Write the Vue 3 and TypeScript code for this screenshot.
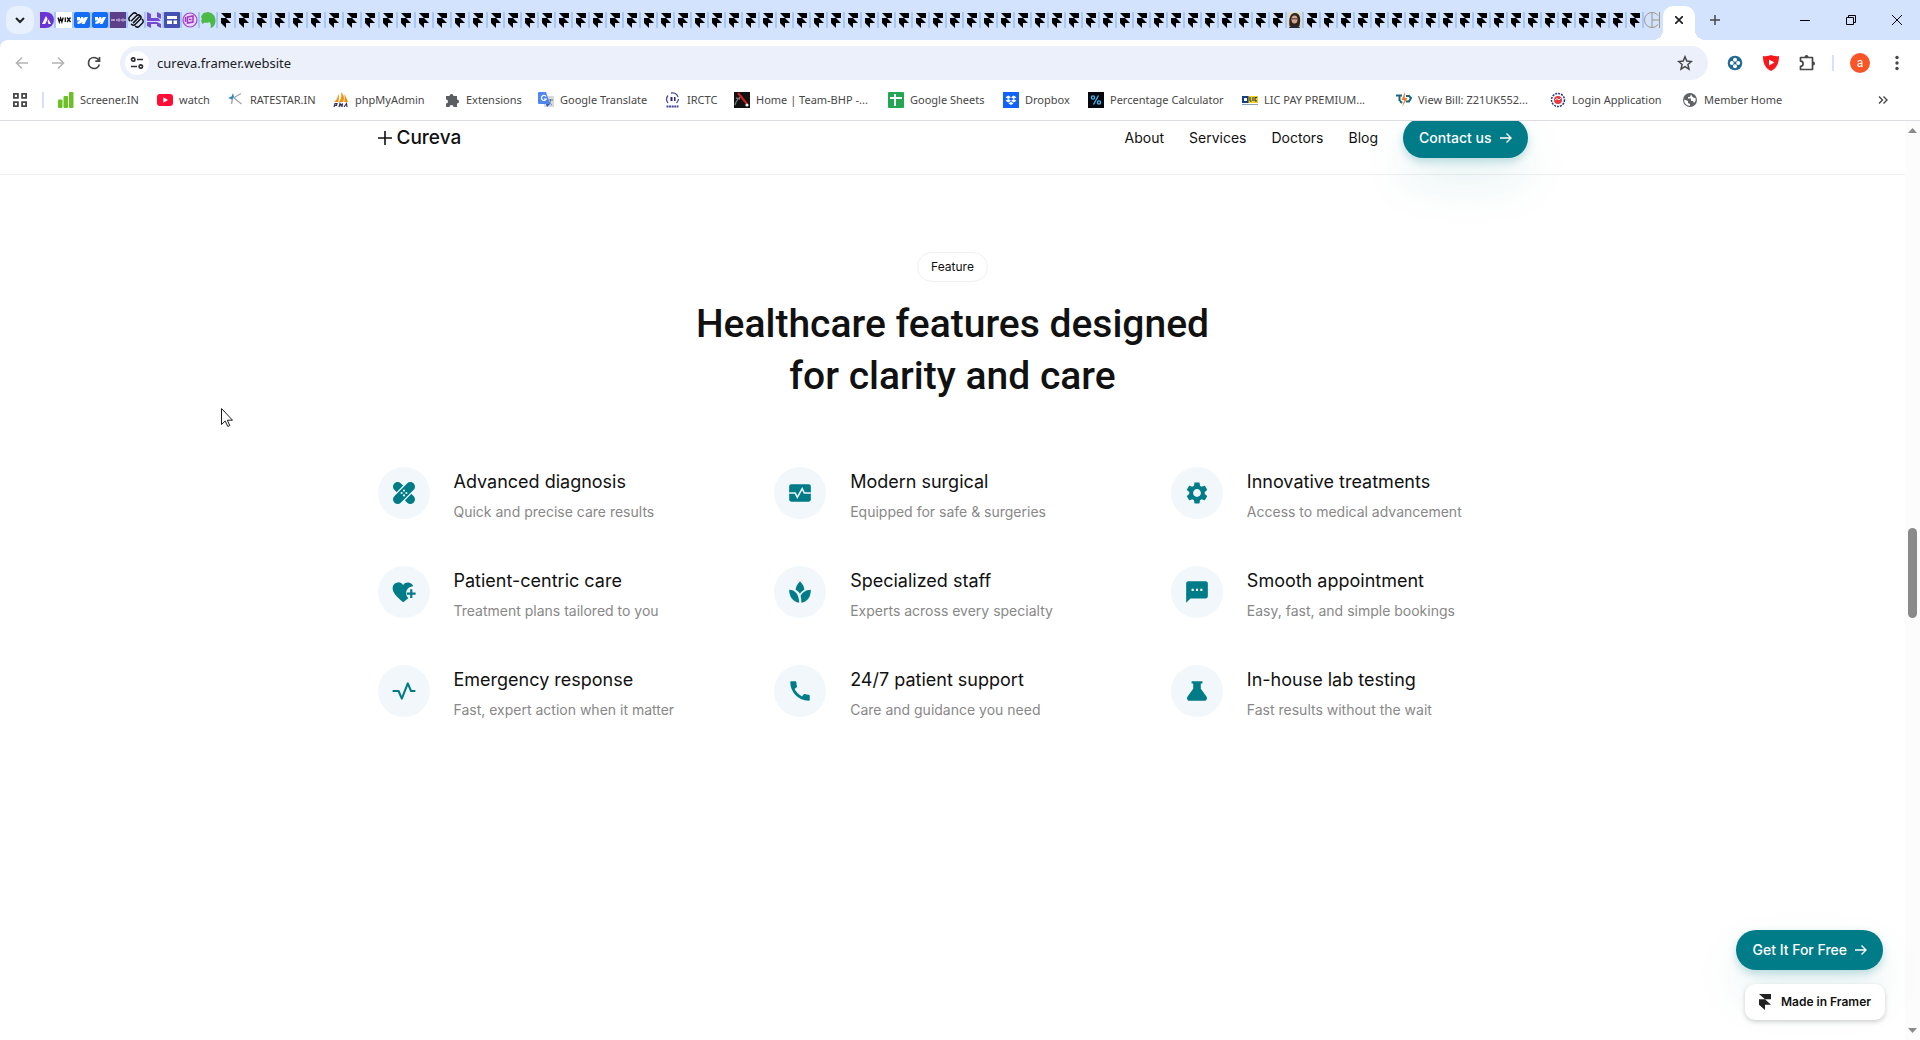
<script setup lang="ts">
interface Bookmark {
  label: string
  icon: string
  width: number
}

interface Feature {
  title: string
  text: string
  icon: string
}

const siteTabs = ['astra', 'wix', 'webflow', 'webflow', 'colorlib', 'squarespace', 'hostinger', 'sites', 'purple', 'horse']
const framerTabs = Array.from({ length: 83 }, (_, i) => i)
const portraitTab = 62
const firstNarrowTab = 15

const bookmarks: Bookmark[] = [
  { label: 'Screener.IN', icon: 'bars', width: 99 },
  { label: 'watch', icon: 'youtube', width: 71 },
  { label: 'RATESTAR.IN', icon: 'star', width: 105 },
  { label: 'phpMyAdmin', icon: 'pma', width: 111 },
  { label: 'Extensions', icon: 'puzzle', width: 94 },
  { label: 'Google Translate', icon: 'translate', width: 127 },
  { label: 'IRCTC', icon: 'irctc', width: 69 },
  { label: 'Home | Team-BHP -...', icon: 'bhp', width: 154 },
  { label: 'Google Sheets', icon: 'sheets', width: 115 },
  { label: 'Dropbox', icon: 'dropbox', width: 85 },
  { label: 'Percentage Calculator', icon: 'percent', width: 154 },
  { label: 'LIC PAY PREMIUM...', icon: 'lic', width: 154 },
  { label: 'View Bill: Z21UK552...', icon: 'bill', width: 154 },
  { label: 'Login Application', icon: 'login', width: 132 },
  { label: 'Member Home', icon: 'globe', width: 102 },
]

const navLinks = ['About', 'Services', 'Doctors', 'Blog']

const features: Feature[] = [
  { title: 'Advanced diagnosis', text: 'Quick and precise care results', icon: 'bandage' },
  { title: 'Modern surgical', text: 'Equipped for safe & surgeries', icon: 'monitor' },
  { title: 'Innovative treatments', text: 'Access to medical advancement', icon: 'gear' },
  { title: 'Patient-centric care', text: 'Treatment plans tailored to you', icon: 'heart' },
  { title: 'Specialized staff', text: 'Experts across every specialty', icon: 'leaf' },
  { title: 'Smooth appointment', text: 'Easy, fast, and simple bookings', icon: 'chat' },
  { title: 'Emergency response', text: 'Fast, expert action when it matter', icon: 'pulse' },
  { title: '24/7 patient support', text: 'Care and guidance you need', icon: 'phone' },
  { title: 'In-house lab testing', text: 'Fast results without the wait', icon: 'flask' },
]
</script>

<template>
  <div class="window">
    <div class="tabstrip">
      <button class="tab-search" aria-label="Search tabs">
        <svg width="10" height="7" viewBox="0 0 10 7"><path d="M1 1l4 4 4-4" fill="none" stroke="#202124" stroke-width="2" /></svg>
      </button>
      <button v-for="(site, i) in siteTabs" :key="'s' + i" class="tab" :aria-label="site">
        <svg width="16" height="16" viewBox="0 0 16 16">
          <g v-if="site === 'astra'">
            <path d="M2 0h6a8 8 0 010 16H2z" fill="#6a35d6" />
            <path d="M4 12l4-8 1.600 3-2.400 5zM9.500 9l1-1.500L13 12h-2.500z" fill="#fff" />
          </g>
          <g v-else-if="site === 'wix'">
            <rect width="16" height="16" fill="#fff" />
            <path d="M2 5.500l1.300 4.500 1.300-4 1.300 4 1.300-4.500M9.300 5.500V10M11 5.500l3.500 4.500M14.500 5.500L11 10" fill="none" stroke="#111" stroke-width="1.300" />
          </g>
          <g v-else-if="site === 'webflow'">
            <rect width="16" height="16" rx="2" fill="#146ef5" />
            <path d="M14 5l-3.500 7H7.600L9 9.200C7.700 11 6 12 3.400 12V9.500s1.600-.1 2.600-1.100H3V5h3v2l1.400-2h2v2l1.500-2z" fill="#fff" />
          </g>
          <g v-else-if="site === 'colorlib'">
            <rect width="16" height="16" fill="#5c3f8a" />
            <path d="M1 8h2.500M4 7v2M6 8h2M9 6.500v3M10.500 8H12M13 6.500v3M15 7v2" stroke="#c3a9d8" stroke-width="1.600" />
          </g>
          <g v-else-if="site === 'squarespace'" fill="none" stroke="#111" stroke-width="1.500" stroke-linecap="round">
            <path d="M3.500 8.800l5-5a2.700 2.700 0 013.800 0M5.500 10.600l5.800-5.800M3.500 12.300a2.700 2.700 0 003.800 0l5-5a2.700 2.700 0 000-3.500M8.500 1.800a2.700 2.700 0 00-3.800 0l-3 3a2.700 2.700 0 000 4M7.500 14.200a2.700 2.700 0 003.800 0l3-3a2.700 2.700 0 000-4" />
          </g>
          <g v-else-if="site === 'hostinger'" fill="#7449d6">
            <path d="M1 0l4 2v4h7l3 3H1zM11 0l4 2v5l-4-2zM1 10h10l4 2v4l-4-2v-2H5v4l-4-2z" />
          </g>
          <g v-else-if="site === 'sites'">
            <rect width="16" height="16" rx="1" fill="#4350af" />
            <path d="M3 4h10v3H3zM3 8.500h5V12H3zM9.500 8.500H13V12H9.500z" fill="#fff" />
          </g>
          <g v-else-if="site === 'purple'">
            <circle cx="8" cy="8" r="7" fill="#e6d8fa" stroke="#a043cf" stroke-width="1.200" />
            <path d="M5.500 5l5.500-1v6l-5.500 1zM3.500 5v5M7 7.500h2.500" fill="none" stroke="#a637c4" stroke-width="1.500" />
          </g>
          <g v-else>
            <path d="M1 5c1-3 3-5 5-4.500L8 0c5 1 7.500 4 7.500 8.500 0 4-2 7-5 7.500.5-2 .5-4-1-6-2 1-4 1-5 .5L2.500 12 1 9c1-1 1-3 0-4z" fill="#4cbb45" />
          </g>
        </svg>
      </button>
      <button
        v-for="n in framerTabs"
        :key="n"
        class="tab"
        :class="{ narrow: n >= firstNarrowTab }"
        aria-label="Framer tab"
      >
        <svg v-if="n === portraitTab" width="15" height="16" viewBox="0 0 15 16">
          <rect width="15" height="16" fill="#d9dccf" />
          <path d="M2.500 14C1.500 7 3 1 8 1s6 5 4.500 13z" fill="#33231f" />
          <ellipse cx="7.500" cy="7.500" rx="3" ry="4" fill="#d3a48e" />
          <path d="M2 16c1-4 10-4 11 0z" fill="#262634" />
          <path d="M5 6.800h5" stroke="#403030" />
        </svg>
        <svg v-else width="14" height="16" viewBox="0 0 14 16">
          <path d="M3 1h10v5H8l5 5H8v5l-5-5V6h5z" fill="#000" />
        </svg>
      </button>
      <button class="tab narrow last" aria-label="Circle tab">
        <svg width="17" height="16" viewBox="0 0 17 16">
          <path d="M14 3.500A7.500 7.500 0 108 15.500 7.500 7.500 0 0014 12.500M8 .5v15M8 8h8M15.500 0v16" fill="none" stroke="#9b9688" />
        </svg>
      </button>
      <div class="active-tab">
        <button aria-label="Close tab">
          <svg width="8" height="8" viewBox="0 0 8 8"><path d="M0 0l8 8M8 0L0 8" stroke="#202124" stroke-width="1.700" /></svg>
        </button>
      </div>
      <button class="new-tab" aria-label="New tab">
        <svg width="10" height="10" viewBox="0 0 10 10"><path d="M5 0v10M0 5h10" stroke="#474747" stroke-width="1.500" /></svg>
      </button>
      <div class="window-controls">
        <button aria-label="Minimize"><svg width="10" height="10"><path d="M0 5.500h10" stroke="#000" /></svg></button>
        <button aria-label="Restore">
          <svg width="10" height="10" fill="none" stroke="#000"><path d="M.5 2.500h7v7h-7zM2.500 2.500v-2h7v7h-2" /></svg>
        </button>
        <button aria-label="Close"><svg width="10" height="10"><path d="M0 0l10 10M10 0L0 10" stroke="#000" /></svg></button>
      </div>
    </div>

    <div class="toolbar">
      <button class="tool" aria-label="Back">
        <svg width="16" height="16" viewBox="0 0 16 16" fill="none" stroke="#b4b4b4" stroke-width="1.600"><path d="M14 8H3M8 2.500L2.500 8 8 13.500" /></svg>
      </button>
      <button class="tool" aria-label="Forward">
        <svg width="16" height="16" viewBox="0 0 16 16" fill="none" stroke="#b4b4b4" stroke-width="1.600"><path d="M2 8h11M8 2.500L13.500 8 8 13.500" /></svg>
      </button>
      <button class="tool" aria-label="Reload">
        <svg width="16" height="16" viewBox="0 0 16 16" fill="none" stroke="#474747" stroke-width="1.700"><path d="M13.300 9.500A5.500 5.500 0 118 2.500c2.500 0 4 1.200 5.500 3.200M13.500 2v4.200H9.300" /></svg>
      </button>
      <div class="omnibox">
        <button class="site-info" aria-label="View site information">
          <svg width="14" height="12" viewBox="0 0 14 12" fill="none" stroke="#303134" stroke-width="1.700">
            <circle cx="3.200" cy="2.500" r="1.700" /><path d="M7 2.500h6M1 9.500h6" /><circle cx="10.800" cy="9.500" r="1.700" />
          </svg>
        </button>
        <input class="address" type="text" value="cureva.framer.website" aria-label="Address and search bar" />
        <button class="bookmark-star" aria-label="Bookmark this tab">
          <svg width="16" height="16" viewBox="0 0 16 16" fill="none" stroke="#474747" stroke-width="1.500"><path d="M8 1.800l1.800 4.300 4.600.4-3.500 3 1.100 4.600L8 11.700l-4 2.400 1.100-4.600-3.500-3 4.600-.4z" /></svg>
        </button>
      </div>
      <div class="extensions">
        <button aria-label="Blue extension">
          <svg width="16" height="16" viewBox="0 0 16 16">
            <circle cx="8" cy="8" r="7.300" fill="#236894" />
            <g fill="#fff"><circle cx="8" cy="4.800" r="2" /><circle cx="8" cy="11.200" r="2" /><circle cx="4.800" cy="8" r="2" /><circle cx="11.200" cy="8" r="2" /></g>
          </svg>
        </button>
        <button aria-label="Video extension">
          <svg width="16" height="16" viewBox="0 0 16 16">
            <path d="M8 0c2 1 5 1.500 8 1 0 7-2 12-8 15C2 13 0 8 0 1c3 .5 6 0 8-1z" fill="#f8181c" />
            <path d="M6 4.500v6L11.500 7.500z" fill="#fff" />
          </svg>
        </button>
        <button aria-label="Extensions">
          <svg width="18" height="18" viewBox="0 0 18 18" fill="none" stroke="#474747" stroke-width="1.700">
            <path d="M2.500 3.500h12v12h-12v-3.200a2.600 2.600 0 000-5.200z" stroke-linejoin="round" /><path d="M6.500 3a2 2 0 014 0zM15 7.500a2 2 0 010 4z" fill="#474747" stroke="none" />
          </svg>
        </button>
        <span class="tool-divider"></span>
        <button class="avatar" aria-label="Profile">a</button>
        <button aria-label="Menu">
          <svg width="4" height="16" viewBox="0 0 4 16" fill="#474747"><circle cx="2" cy="2.500" r="1.700" /><circle cx="2" cy="8" r="1.700" /><circle cx="2" cy="13.500" r="1.700" /></svg>
        </button>
      </div>
    </div>

    <div class="bookmarks">
      <button class="apps" aria-label="Tab groups">
        <svg width="16" height="16" viewBox="0 0 16 16" fill="none" stroke="#474747" stroke-width="1.800"><path d="M1.900 1.900h4v4h-4zM10.100 1.900h4v4h-4zM1.900 10.100h4v4h-4zM10.100 10.100h4v4h-4z" /></svg>
      </button>
      <span class="bookmark-divider"></span>
      <a v-for="b in bookmarks" :key="b.label" href="#" class="bookmark" :style="{ width: b.width + 'px' }">
        <svg width="16" height="16" viewBox="0 0 16 16">
          <g v-if="b.icon === 'bars'" fill="#6cbf25">
            <rect y="7.500" width="4.500" height="8.500" rx="1" /><rect x="5.500" y="4" width="4.500" height="12" rx="1" /><rect x="11" y="0" width="4.500" height="16" rx="1" />
          </g>
          <g v-else-if="b.icon === 'youtube'">
            <rect y="2" width="16" height="12" rx="3" fill="#ff0d36" /><path d="M6.300 5.200v5.600L11 8z" fill="#fff" />
          </g>
          <g v-else-if="b.icon === 'star'">
            <path d="M5.500 6L13 1.500M6 6l7.500 6M4.500 6.500L3.500 12" fill="none" stroke="#a3a7ab" stroke-width="1.400" /><path d="M0 6l3.500-1.500L5 1l1 4-2 2.500z" fill="#2f84c2" />
          </g>
          <g v-else-if="b.icon === 'pma'">
            <path d="M1 10C4 8 5 5 5 2c1.500 2 1 6 0 8zM6 10c2-3 3-6 2-10 3 3 4 7 2 10zM11 10c1-3 1-5 0-8 2 2 3 5 4 8z" fill="#f29111" /><path d="M1 15l1-3.500h2l-.5 1.800H1.800M6 15l1-3.500 1 2 1.500-2L9 15M11 15l2.500-3.500L14 15" fill="none" stroke="#34345e" stroke-width="1.200" />
          </g>
          <g v-else-if="b.icon === 'puzzle'" fill="#5a5e63">
            <path d="M2 4h3.500a2 2 0 114 0H13v3.500a2 2 0 110 4V15H9.500a2 2 0 10-4 0H2v-3.500a2 2 0 100-4z" />
          </g>
          <g v-else-if="b.icon === 'translate'">
            <rect x="6" y="4" width="10" height="11" rx="1" fill="#d6d8dc" /><path d="M10 8h5M12.500 7v1c0 2-1 4-2.500 5M11 9.500c1 2 2 3 3 3.500" fill="none" stroke="#6e7b85" /><path d="M1 0h7l4 12H1a1 1 0 01-1-1V1a1 1 0 011-1z" fill="#4d87ef" /><path d="M8 12h4l-3 3z" fill="#2b59c3" /><path d="M8 4.500A2.500 2.500 0 108.200 7H6" fill="none" stroke="#fff" stroke-width="1.200" />
          </g>
          <g v-else-if="b.icon === 'irctc'">
            <path d="M3 3.500A6 6 0 003 11M6 1a6 6 0 017 4M13.500 7a6 6 0 01-2 4" fill="none" stroke="#4a4a9c" stroke-width="1.300" /><path d="M5.500 5h2v4h-2zM9 5h1.500v4H9z" fill="#27277d" /><path d="M1.500 14.500h12" stroke="#42429a" stroke-width="2" stroke-dasharray="2 .6" />
          </g>
          <g v-else-if="b.icon === 'bhp'">
            <rect width="16" height="16" fill="#111" /><path d="M1 13C2 9 4 6 8 4M2 6l4 1" fill="none" stroke="#777" stroke-width="1.300" /><path d="M4 1l9 11" stroke="#d81f1f" stroke-width="2" /><circle cx="13" cy="13" r="1.600" fill="#eee" />
          </g>
          <g v-else-if="b.icon === 'sheets'">
            <rect width="16" height="16" rx="1" fill="#25a653" /><path d="M2 6h12M7 2v12" stroke="#fff" stroke-width="2" />
          </g>
          <g v-else-if="b.icon === 'dropbox'">
            <rect width="16" height="16" fill="#1162fd" /><path d="M5.300 3.500L8 5.200 5.300 7 2.600 5.200zM10.700 3.500l2.700 1.700L10.700 7 8 5.200zM5.300 7L8 8.700l-2.700 1.700-2.700-1.700zM10.700 7l2.700 1.700-2.700 1.700L8 8.700zM8 9.800l2.500 1.600L8 13l-2.500-1.600z" fill="#fff" />
          </g>
          <g v-else-if="b.icon === 'percent'">
            <rect width="16" height="16" fill="#05080c" /><path d="M10.500 3.500l-5 9" stroke="#4fb4f0" stroke-width="1.300" /><circle cx="5" cy="5.500" r="1.600" fill="none" stroke="#4fb4f0" stroke-width="1.400" /><circle cx="11" cy="10.500" r="1.600" fill="none" stroke="#4fb4f0" stroke-width="1.400" />
          </g>
          <g v-else-if="b.icon === 'lic'">
            <rect y="4" width="16" height="7" fill="#173f83" /><rect x="6.500" y="4" width="9.500" height="7" fill="#f3d01f" /><path d="M8 5v4h1.500M11 5v4M15 5.500h-2V9h2" fill="none" stroke="#1a2d5b" /><rect x="2" y="6" width="3" height="3" fill="#fff" /><path d="M0 12.500h16" stroke="#8ba0bf" />
          </g>
          <g v-else-if="b.icon === 'bill'">
            <path d="M0 3.500h6M3.500 4v5M10 4h3l2 2-2 3.500h-3M4 9l2 2" fill="none" stroke="#1b647e" stroke-width="2" /><path d="M9 0L5.500 8h2.800L6 15l5.500-9H8.800z" fill="#f07b28" />
          </g>
          <g v-else-if="b.icon === 'login'">
            <circle cx="8" cy="8" r="6.500" fill="#fff" stroke="#20327c" stroke-width="1.500" stroke-dasharray="2 1" /><circle cx="8" cy="8" r="4" fill="#e33a44" /><path d="M5 8l2-1.500L9 8l2-2" fill="none" stroke="#fff" />
          </g>
          <g v-else>
            <circle cx="8" cy="8" r="7" fill="#5f6368" /><path d="M9 2.500L8 5H6v1.500h3V9h2l1 2c1.500-1.500 2-3 1.500-5L11 5.500zM2.200 7.500L6 9v2l2 1v1.800C4 13.500 2 11 2.200 7.500z" fill="#fff" />
          </g>
        </svg>
        <span>{{ b.label }}</span>
      </a>
      <button class="more-bookmarks" aria-label="More bookmarks">
        <svg width="10" height="8" viewBox="0 0 10 8" fill="none" stroke="#474747" stroke-width="1.400"><path d="M1 .5L4.500 4 1 7.500M5.500 .5L9 4 5.500 7.500" /></svg>
      </button>
    </div>

    <div class="viewport">
      <div class="page">
        <header class="site-header">
          <div class="container header-row">
            <a href="#" class="logo">
              <svg width="14" height="14" viewBox="0 0 14 14"><path d="M7 0v14M0 7h14" stroke="#111" stroke-width="1.600" /></svg>
              <span>Cureva</span>
            </a>
            <nav class="nav">
              <a v-for="link in navLinks" :key="link" href="#">{{ link }}</a>
              <button class="cta">
                <span>Contact us</span>
                <svg width="12" height="12" viewBox="0 0 12 12" fill="none" stroke="#fff" stroke-width="1.400"><path d="M0 6h11M6.500 1.500L11 6l-4.500 4.500" /></svg>
              </button>
            </nav>
          </div>
        </header>

        <main class="container features">
          <span class="pill">Feature</span>
          <h2>Healthcare features designed<br />for clarity and care</h2>
          <ul class="grid">
            <li v-for="f in features" :key="f.title" class="card">
              <span class="badge">
                <svg width="26" height="26" viewBox="0 0 24 24" fill="#007c89">
                  <g v-if="f.icon === 'bandage'">
                    <rect x="-.5" y="7.800" width="25" height="8.400" rx="4" transform="rotate(45 12 12)" />
                    <rect x="-1.500" y="6.600" width="27" height="10.800" rx="4" transform="rotate(-45 12 12)" fill="#f1f7fa" />
                    <rect x="-.5" y="7.800" width="25" height="8.400" rx="4" transform="rotate(-45 12 12)" />
                    <g fill="#f1f7fa"><circle cx="12" cy="9.800" r="1" /><circle cx="12" cy="14.200" r="1" /><circle cx="9.800" cy="12" r="1" /><circle cx="14.200" cy="12" r="1" /></g>
                  </g>
                  <g v-else-if="f.icon === 'monitor'">
                    <rect x="2" y="4" width="20" height="16" rx="2" />
                    <path d="M2 12h5.500l2 4 4.500-8 2 4h6" fill="none" stroke="#f1f7fa" stroke-width="1.500" />
                  </g>
                  <path v-else-if="f.icon === 'gear'" d="M19.140 12.940c.04-.3.06-.61.06-.94 0-.32-.02-.64-.07-.94l2.030-1.580c.18-.14.23-.41.12-.61l-1.920-3.320c-.12-.22-.37-.29-.59-.22l-2.390.96c-.5-.38-1.030-.7-1.620-.94l-.36-2.540c-.04-.24-.24-.41-.48-.41h-3.840c-.24 0-.43.17-.47.41l-.36 2.540c-.59.24-1.130.57-1.620.94l-2.390-.96c-.22-.08-.47 0-.59.22L2.740 8.870c-.12.21-.08.47.12.61l2.030 1.580c-.05.3-.09.63-.09.94s.02.64.07.94l-2.030 1.580c-.18.14-.23.41-.12.61l1.920 3.320c.12.22.37.29.59.22l2.390-.96c.5.38 1.030.7 1.620.94l.36 2.540c.05.24.24.41.48.41h3.840c.24 0 .44-.17.47-.41l.36-2.540c.59-.24 1.130-.56 1.620-.94l2.390.96c.22.08.47 0 .59-.22l1.920-3.320c.12-.22.07-.47-.12-.61l-2.010-1.580zM12 15.600c-1.980 0-3.600-1.620-3.600-3.600s1.620-3.600 3.600-3.600 3.600 1.620 3.600 3.600-1.620 3.600-3.600 3.600z" />
                  <g v-else-if="f.icon === 'heart'">
                    <path d="M11.200 21.500C5 16 1.500 12.500 1.500 8.500a5.300 5.300 0 019.700-3 5.300 5.300 0 019.300 1.200c-4 .3-6.500 3-6.500 6.300 0 2 .8 3.600 2 4.700z" />
                    <path d="M18.700 9.500v8M14.700 13.500h8" stroke="#007c89" stroke-width="2" />
                  </g>
                  <path v-else-if="f.icon === 'leaf'" d="M12 2c2.500 2.700 4 5.300 4 8-1.500.9-3 2.200-4 3.600C11 12.200 9.500 10.900 8 10c0-2.700 1.500-5.300 4-8zM2 10c5.500.1 9 4 9.300 12C5.500 21 2 16.500 2 10zM22 10c0 6.500-3 11-8.700 12-.1-3-.2-4.500-.8-6.200C14.500 12 17.500 10.100 22 10z" />
                  <path v-else-if="f.icon === 'chat'" d="M20 2H4c-1.100 0-1.990.9-1.990 2L2 22l4-4h14c1.100 0 2-.9 2-2V4c0-1.100-.9-2-2-2zM9 11H7V9h2v2zm4 0h-2V9h2v2zm4 0h-2V9h2v2z" />
                  <path v-else-if="f.icon === 'pulse'" d="M1.500 12H7l3 7 5.500-14 3 7h4" fill="none" stroke="#007c89" stroke-width="1.900" stroke-linejoin="round" />
                  <path v-else-if="f.icon === 'phone'" d="M20.010 15.380c-1.230 0-2.420-.2-3.530-.56a.977.977 0 00-1.010.24l-1.570 1.970c-2.830-1.350-5.480-3.900-6.890-6.830l1.950-1.660c.27-.28.35-.67.24-1.020-.37-1.110-.56-2.300-.56-3.530 0-.54-.45-.99-.99-.99H4.190C3.650 3 3 3.240 3 3.990 3 13.280 10.730 21 20.010 21c.71 0 .99-.63.99-1.180v-3.450c0-.54-.45-.99-.99-.99z" />
                  <path v-else d="M7 3h10v2h-1.500v5l5.200 7c1.200 1.700.2 4-1.900 4H5.200c-2.100 0-3.100-2.300-1.900-4l5.200-7V5H7z" />
                </svg>
              </span>
              <div>
                <h3>{{ f.title }}</h3>
                <p>{{ f.text }}</p>
              </div>
            </li>
          </ul>
        </main>
      </div>
      <div class="scrollbar">
        <svg width="9" height="5"><path d="M0 5h9L4.500 0z" fill="#8a8a8a" /></svg>
        <span class="thumb"></span>
        <svg width="9" height="5"><path d="M0 0h9L4.500 5z" fill="#8a8a8a" /></svg>
      </div>

      <div class="floating">
        <button class="cta">
          <span>Get It For Free</span>
          <svg width="12" height="12" viewBox="0 0 12 12" fill="none" stroke="#fff" stroke-width="1.400"><path d="M0 6h11M6.500 1.500L11 6l-4.500 4.500" /></svg>
        </button>
        <a href="#" class="framer-badge">
          <svg width="12" height="16" viewBox="0 0 12 16"><path d="M0 0h12v5.300H6zM0 5.300h6l6 5.400H6V16l-6-5.300z" fill="#222" /></svg>
          <span>Made in Framer</span>
        </a>
      </div>
      <svg class="cursor" width="13" height="20" viewBox="0 0 13 20"><path d="M.5 .5v16l3.700-3.500 2.600 5.500 2-1-2.500-5.300h5.200z" fill="#fff" stroke="#1b1b24" /></svg>
    </div>
  </div>
</template>

<style>
body {
  margin: 0;
  background: #fff;
}
</style>

<style scoped>
* {
  box-sizing: border-box;
}

button {
  padding: 0;
  border: 0;
  background: none;
  font: inherit;
  color: inherit;
}

a {
  color: inherit;
  text-decoration: none;
}

svg {
  display: block;
  flex: none;
}

.window {
  display: flex;
  flex-direction: column;
  height: 100vh;
  overflow: hidden;
  background: #d3e2fd;
  font-family: Inter, sans-serif;
  color: #111;
}

.tabstrip {
  display: flex;
  align-items: center;
  flex: none;
  height: 40px;
  padding-left: 6px;
}

.tab-search {
  display: flex;
  align-items: center;
  justify-content: center;
  width: 28px;
  height: 28px;
  margin-right: 4px;
  border-radius: 10px;
  background: #e9f0fd;
}

.tab {
  flex: none;
  width: 18px;
  height: 16px;
  overflow: hidden;
  border-right: 2px solid #a8c7fa;
}

.tab.narrow {
  width: 17px;
}

.tab.last {
  border-right: 0;
}

.active-tab {
  position: relative;
  display: flex;
  align-items: center;
  justify-content: center;
  align-self: flex-end;
  flex: none;
  width: 32px;
  height: 34px;
  margin-left: 2px;
  padding-bottom: 6px;
  border-radius: 10px 10px 0 0;
  background: #fff;
}

.active-tab::before,
.active-tab::after {
  content: "";
  position: absolute;
  bottom: 0;
  width: 10px;
  height: 10px;
}

.active-tab::before {
  right: 100%;
  background: radial-gradient(circle at 0 0, transparent 10px, #fff 10px);
}

.active-tab::after {
  left: 100%;
  background: radial-gradient(circle at 100% 0, transparent 10px, #fff 10px);
}

.new-tab {
  margin-left: 15px;
}

.window-controls {
  display: flex;
  gap: 36px;
  margin-left: auto;
  padding-right: 18px;
}

.toolbar {
  display: flex;
  align-items: center;
  flex: none;
  height: 40px;
  padding: 6px 14px 0 14px;
  border-radius: 8px 0 0 0;
  background: #fff;
}

.tool {
  width: 16px;
  margin-right: 20px;
}

.omnibox {
  display: flex;
  align-items: center;
  flex: 1;
  height: 34px;
  margin-left: -2px;
  padding: 0 15px 0 5px;
  border-radius: 17px;
  background: #ebf0fa;
}

.site-info {
  display: flex;
  align-items: center;
  justify-content: center;
  width: 24px;
  height: 24px;
  border-radius: 12px;
  background: #fff;
}

.address {
  flex: 1;
  margin-left: 8px;
  padding: 0;
  border: 0;
  outline: 0;
  background: transparent;
  font: 13px/20px "Noto Sans", sans-serif;
  color: #202124;
}

.extensions {
  display: flex;
  align-items: center;
  gap: 18px;
  margin-left: 18px;
}

.extensions button {
  display: flex;
  align-items: center;
  justify-content: center;
  width: 18px;
}

.tool-divider {
  width: 2px;
  height: 16px;
  margin: 0 -2px;
  background: #d3e2fd;
}

.extensions .avatar {
  width: 20px;
  height: 20px;
  border-radius: 10px;
  background: #fa5427;
  font: 12px/18px Roboto, sans-serif;
  color: #fff;
}

.bookmarks {
  display: flex;
  align-items: center;
  flex: none;
  height: 41px;
  padding: 0 32px 0 12px;
  border-bottom: 1px solid #dcdde0;
  background: #fff;
  font: 11px/16px "Noto Sans", sans-serif;
  color: #474747;
}

.bookmark-divider {
  width: 2px;
  height: 16px;
  margin: 0 14px;
  background: #d3e2fd;
}

.bookmark {
  display: flex;
  align-items: center;
  flex: none;
  gap: 6px;
  white-space: nowrap;
}

.more-bookmarks {
  margin-left: auto;
}

.viewport {
  position: relative;
  display: flex;
  flex: 1;
  min-height: 0;
  overflow: hidden;
  background: #fff;
}

.page {
  flex: 1;
  margin-top: -19px;
}

.container {
  width: 100%;
  max-width: 1150px;
  margin: 0 auto;
}

.site-header {
  border-bottom: 1px solid #efefef;
}

.header-row {
  display: flex;
  align-items: center;
  justify-content: space-between;
  height: 72px;
}

.logo {
  display: flex;
  align-items: center;
  gap: 5px;
  font-size: 19px;
  line-height: 24px;
  font-weight: 500;
}

.nav {
  display: flex;
  align-items: center;
  gap: 25px;
  font-size: 14px;
  line-height: 24px;
}

.cta {
  display: flex;
  align-items: center;
  gap: 8px;
  height: 40px;
  padding: 0 16px;
  border-radius: 20px;
  background: #007c89;
  box-shadow: 0 4px 8px rgba(0, 124, 137, 0.24), 0 24px 48px rgba(0, 124, 137, 0.1);
  font-size: 14px;
  line-height: 24px;
  font-weight: 500;
  color: #fff;
  white-space: nowrap;
}

.features {
  display: flex;
  flex-direction: column;
  align-items: center;
  padding-top: 77px;
}

.pill {
  padding: 4px 13px;
  border: 1px solid #f0f0f0;
  border-radius: 15px;
  font-size: 12px;
  line-height: 20px;
}

h2 {
  margin: 16px 0 65px;
  font-family: Roboto, sans-serif;
  font-size: 39px;
  line-height: 52px;
  font-weight: 500;
  text-align: center;
}

.grid {
  display: grid;
  grid-template-columns: repeat(3, 1fr);
  gap: 42px 40px;
  width: 100%;
  margin: 0;
  padding: 0;
  list-style: none;
}

.card {
  display: flex;
  gap: 24px;
}

.badge {
  display: flex;
  align-items: center;
  justify-content: center;
  flex: none;
  width: 52px;
  height: 52px;
  border-radius: 26px;
  background: #f1f7fa;
}

h3 {
  margin: 0 0 2px;
  font-size: 18px;
  line-height: 30px;
  font-weight: 400;
}

p {
  margin: 0;
  font-size: 14px;
  line-height: 25px;
  color: #888;
}

.scrollbar {
  display: flex;
  flex-direction: column;
  align-items: center;
  justify-content: space-between;
  width: 15px;
  padding: 7px 0;
  background: #fcfcfc;
}

.thumb {
  width: 9px;
  height: 90px;
  margin-bottom: 16px;
  border-radius: 5px;
  background: #8a8a8a;
}

.floating {
  position: absolute;
  right: 35px;
  bottom: 20px;
  display: flex;
  flex-direction: column;
  align-items: flex-end;
  gap: 14px;
}

.floating .cta {
  margin-right: 2px;
}

.framer-badge {
  display: flex;
  align-items: center;
  gap: 10px;
  height: 36px;
  padding: 0 14px;
  border-radius: 10px;
  background: #fff;
  box-shadow: 0 2px 4px rgba(0, 0, 0, 0.15), 0 1px 10px rgba(0, 0, 0, 0.05);
  font-size: 12px;
  line-height: 20px;
  font-weight: 600;
}

.cursor {
  position: absolute;
  left: 221px;
  top: 287px;
}
</style>
